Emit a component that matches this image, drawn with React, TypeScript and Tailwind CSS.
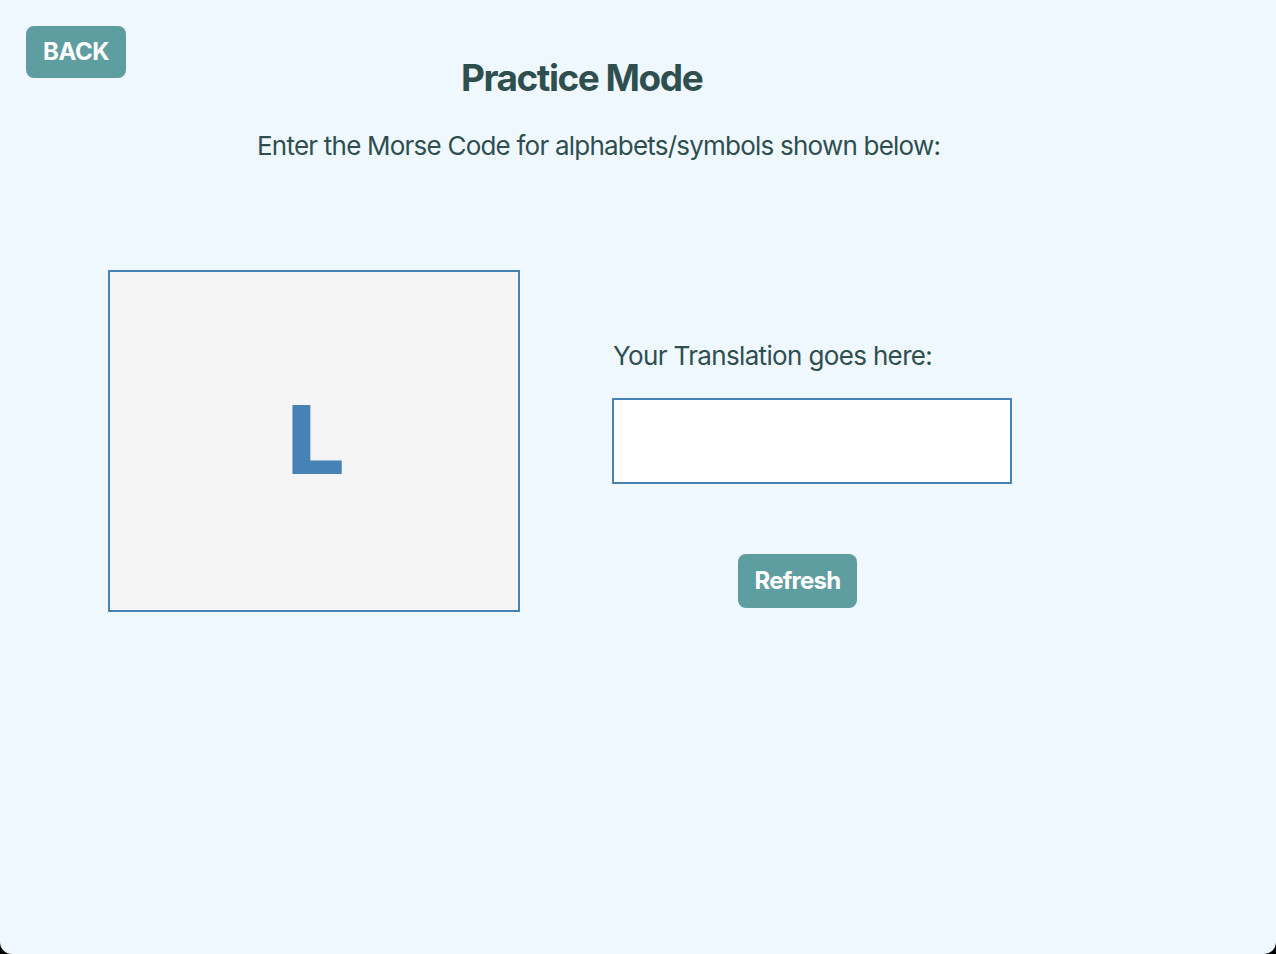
import React from 'react';

const font = { fontFamily: 'Inter, "Noto Sans", sans-serif' };

export default function App() {
  return (
    <div className="h-[954px] w-full bg-black" style={font}>
      <div className="flex h-full w-full flex-col rounded-b-[12px] bg-[#f0f8ff] text-[#2f4f4f]">
        {/* header */}
        <div className="flex items-start pl-[26px] pt-[26px]">
          <button className="h-[52px] w-[100px] rounded-[8px] bg-[#5f9ea0] text-[24px] font-bold tracking-[-0.02em] text-white">
            BACK
          </button>
          <h1 className="ml-[335px] mt-[30px] text-[37px] font-bold leading-[44px] tracking-[-0.04em]">
            Practice Mode
          </h1>
        </div>

        <p className="ml-[257px] mt-[30px] text-[26px] leading-[32px] tracking-[-0.03em]">
          Enter the Morse Code for alphabets/symbols shown below:
        </p>

        {/* practice area */}
        <div className="ml-[108px] mt-[108px] flex items-start">
          <div className="flex h-[342px] w-[412px] items-center justify-center border-2 border-[#4682b4] bg-[#f5f5f5]">
            <span className="text-[95px] font-bold leading-none text-[#4682b4] [font-family:'DejaVu_Sans',sans-serif]">
              L
            </span>
          </div>

          <div className="ml-[92px] mt-[68px] flex flex-col">
            <label className="ml-[1px] text-[26px] leading-[36px] tracking-[-0.025em]">
              Your Translation goes here:
            </label>
            <input
              type="text"
              className="mt-[24px] h-[86px] w-[400px] border-2 border-[#4682b4] bg-white px-3 text-[24px] outline-none"
            />
            <button className="ml-[126px] mt-[70px] h-[54px] w-[119px] rounded-[8px] bg-[#5f9ea0] text-[24px] font-bold tracking-[-0.03em] text-white">
              Refresh
            </button>
          </div>
        </div>
      </div>
    </div>
  );
}
